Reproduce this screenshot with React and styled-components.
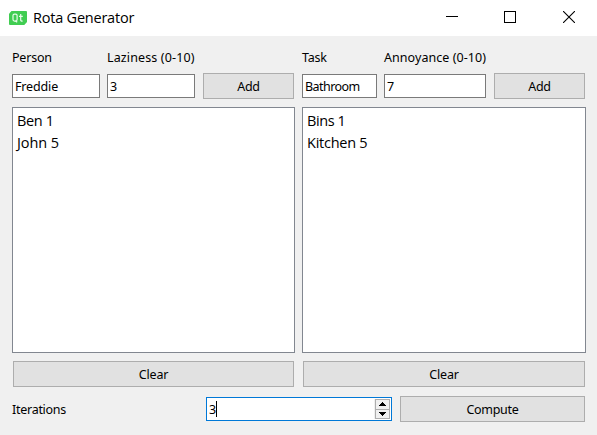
import React from 'react';
import styled, { createGlobalStyle } from 'styled-components';

const GlobalStyle = createGlobalStyle`
  * { box-sizing: border-box; }
  body { margin: 0; overflow: hidden; }
`;

const Window = styled.div`
  width: 597px;
  height: 435px;
  display: flex;
  flex-direction: column;
  background: #f0f0f0;
  color: #000;
  font: 12.5px/16px "Noto Sans", sans-serif;
`;

const TitleBar = styled.header`
  height: 36px;
  flex: none;
  display: flex;
  align-items: center;
  padding-left: 9px;
  background: #fff;
`;

const Title = styled.h1`
  flex: 1;
  margin: 0 0 0 6px;
  font: 400 14.5px/20px "Open Sans", sans-serif;
  letter-spacing: -0.22px;
  white-space: nowrap;
`;

const WindowButton = styled.button`
  width: 58px;
  height: 36px;
  padding: 0 0 2px;
  border: 0;
  background: none;
  display: flex;
  align-items: center;
  justify-content: center;

  &:last-child { padding-left: 2px; }
  svg { display: block; }
`;

const Content = styled.main`
  padding: 14px 11px 0 12px;
`;

const Panels = styled.div`
  display: grid;
  grid-template-columns: 283px 284px;
  column-gap: 7px;
`;

const Panel = styled.section`
  display: flex;
  flex-direction: column;
`;

const FieldRow = styled.div`
  display: grid;
  grid-template-columns: ${(p) => p.$columns};
  column-gap: 7px;
  align-items: end;
  height: 49px;
`;

const Field = styled.label`
  display: flex;
  flex-direction: column;
  gap: 8px;
  padding-bottom: 1px;
`;

const Caption = styled.span`
  letter-spacing: ${(p) => p.$tracking || 0}px;
  white-space: nowrap;
`;

const TextField = styled.input`
  width: 100%;
  height: 24px;
  margin: 0;
  padding: 0 0 0 2px;
  border: 1px solid #7a7a7a;
  border-radius: 0;
  outline: 0;
  background: #fff;
  color: #000;
  font: inherit;
  letter-spacing: ${(p) => p.$tracking || 0}px;
`;

const PushButton = styled.button`
  height: 26px;
  margin: 0;
  padding: 2px 0 0;
  border: 1px solid #adadad;
  border-radius: 0;
  background: #e1e1e1;
  color: #000;
  font: inherit;
  letter-spacing: -0.3px;
`;

const AddButton = styled(PushButton)`
  margin-left: 1px;
`;

const ClearButton = styled(PushButton)`
  margin: 8px 1px 0;
  letter-spacing: -0.2px;
`;

const List = styled.ul`
  height: 246px;
  margin: 8px 0 0;
  padding: 2px 4px;
  list-style: none;
  border: 1px solid #828790;
  background: #fff;
  font: 14.5px/22px "Open Sans", sans-serif;
`;

const ListItem = styled.li`
  height: 22px;
  letter-spacing: ${(p) => p.$tracking || 0}px;
`;

const Footer = styled.footer`
  display: grid;
  grid-template-columns: 194px 186px 8px 185px;
  align-items: center;
  margin-top: 9px;
`;

const FooterCaption = styled(Caption)`
  padding-top: 2px;
`;

const ComputeButton = styled(PushButton)`
  grid-column: 4;
`;

const SpinBox = styled.div`
  height: 24px;
  display: flex;
  align-items: center;
  padding: 1px 1px 1px 2px;
  border: 1px solid #0078d7;
  background: #fff;
`;

const SpinValue = styled.span`
  padding-top: 2px;
`;

const Caret = styled.span`
  width: 1px;
  height: 16px;
  background: #000;
`;

const SpinButtons = styled.div`
  margin-left: auto;
  width: 16px;
  height: 20px;
  padding-left: 1px;
  background: #f0f0f0;
  svg { display: block; }
`;

const QtLogo = () => (
  <svg width="18" height="14" viewBox="0 0 18 14" aria-label="Qt">
    <path d="M2.5 0H17Q18 0 18 1V11L15.3 14H1Q0 14 0 13V2.7Z" fill="#41cd52" />
    <g fill="none" stroke="#e8fbea" strokeWidth="1.2">
      <rect x="4" y="3.1" width="4.1" height="7" rx="1.5" />
      <path d="M6.5 9.7L8.2 11.3M11.7 3V9.2Q11.7 10.2 13.7 10M10 5.3H13.8" />
    </g>
  </svg>
);

const Stepper = () => (
  <svg width="15" height="20" viewBox="0 0 15 20" shapeRendering="crispEdges">
    <rect width="15" height="20" fill="#adadad" />
    <path d="M1 1h13v9H1zM1 11h13v8H1z" fill="#f0f0f0" />
    <path d="M7 3h1v1h1v1h1v1h1v1H4V6h1V5h1V4h1zM4 13h7v1h-1v1H9v1H8v1H7v-1H6v-1H5v-1H4z" fill="#000" />
  </svg>
);

const panels = [
  {
    columns: '88px 88px 92px',
    name: { label: 'Person', value: 'Freddie', labelTracking: -0.2, valueTracking: -0.15 },
    score: { label: 'Laziness (0-10)', value: '3', labelTracking: 0.13 },
    items: [
      { text: 'Ben 1', tracking: -0.35 },
      { text: 'John 5', tracking: -0.1 },
    ],
  },
  {
    columns: '75px 102px 92px',
    name: { label: 'Task', value: 'Bathroom', labelTracking: -0.2, valueTracking: -0.55 },
    score: { label: 'Annoyance (0-10)', value: '7', labelTracking: 0.06 },
    items: [
      { text: 'Bins 1', tracking: -0.4 },
      { text: 'Kitchen 5', tracking: -0.25 },
    ],
  },
];

const LabeledField = ({ label, value, labelTracking, valueTracking }) => (
  <Field>
    <Caption $tracking={labelTracking}>{label}</Caption>
    <TextField defaultValue={value} $tracking={valueTracking} />
  </Field>
);

export default function App() {
  return (
    <Window>
      <GlobalStyle />
      <TitleBar>
        <QtLogo />
        <Title>Rota Generator</Title>
        <WindowButton aria-label="Minimize">
          <svg width="12" height="12" shapeRendering="crispEdges"><path d="M0 5h12v1H0z" /></svg>
        </WindowButton>
        <WindowButton aria-label="Maximize">
          <svg width="12" height="12" shapeRendering="crispEdges"><path d="M.5.5h11v11H.5z" fill="none" stroke="#000" /></svg>
        </WindowButton>
        <WindowButton aria-label="Close">
          <svg width="12" height="12"><path d="M0 0L12 12M12 0L0 12" stroke="#000" strokeWidth="1.1" /></svg>
        </WindowButton>
      </TitleBar>
      <Content>
        <Panels>
          {panels.map((p) => (
            <Panel key={p.name.label}>
              <FieldRow $columns={p.columns}>
                <LabeledField {...p.name} />
                <LabeledField {...p.score} />
                <AddButton>Add</AddButton>
              </FieldRow>
              <List>
                {p.items.map((item) => (
                  <ListItem key={item.text} $tracking={item.tracking}>{item.text}</ListItem>
                ))}
              </List>
              <ClearButton>Clear</ClearButton>
            </Panel>
          ))}
        </Panels>
        <Footer>
          <FooterCaption $tracking={-0.27}>Iterations</FooterCaption>
          <SpinBox>
            <SpinValue>3</SpinValue>
            <Caret />
            <SpinButtons><Stepper /></SpinButtons>
          </SpinBox>
          <ComputeButton>Compute</ComputeButton>
        </Footer>
      </Content>
    </Window>
  );
}
